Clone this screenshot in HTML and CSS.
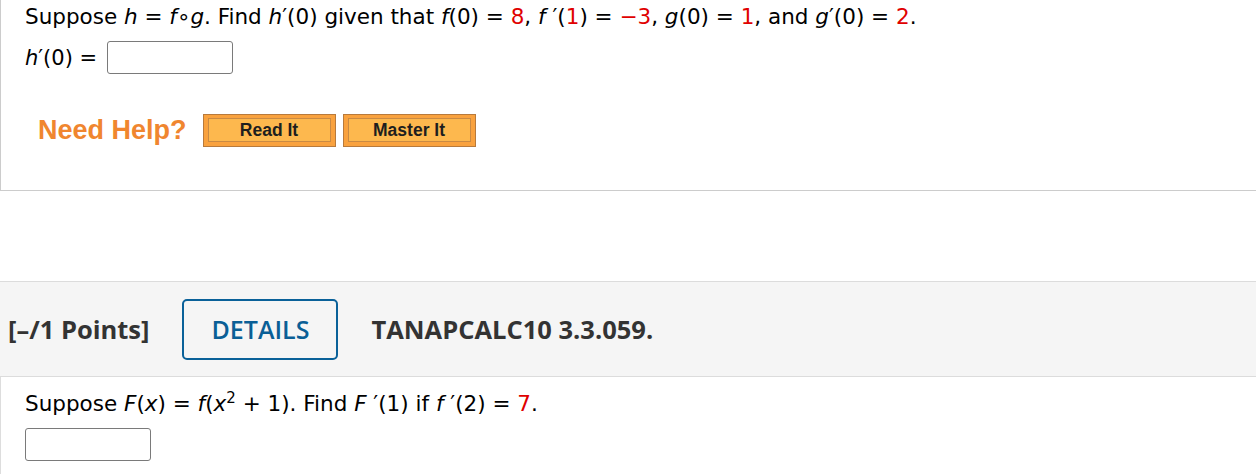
FILE: index.html
```html
<!DOCTYPE html>
<html>
<head>
<meta charset="utf-8">
<link rel="stylesheet" href="styles.css">
</head>
<body>
<div class="question q1">
  <p class="stem">Suppose <i>h</i> = <i>f</i>∘<i>g</i>. Find <i>h</i>′(0) given that <i>f</i>(0) = <span class="red">8</span>, <i>f</i> ′(<span class="red">1</span>) = <span class="red">−3</span>, <i>g</i>(0) = <span class="red">1</span>, and <i>g</i>′(0) = <span class="red">2</span>.</p>
  <div class="answer-row"><span><i>h</i>′(0) = </span><span class="input"></span></div>
  <div class="help">
    <span class="need">Need Help?</span>
    <span class="btn"><span class="btn-in">Read It</span></span>
    <span class="btn"><span class="btn-in">Master It</span></span>
  </div>
</div>
<div class="spacer"></div>
<div class="qhead">
  <span class="points">[–/1 Points]</span>
  <span class="details">DETAILS</span>
  <span class="code">TANAPCALC10 3.3.059.</span>
</div>
<div class="question q2">
  <p class="stem">Suppose <i>F</i>(<i>x</i>) = <i>f</i>(<i>x</i><sup>2</sup> + 1). Find <i>F</i> ′(1) if <i>f</i> ′(2) = <span class="red">7</span>.</p>
  <div class="answer-row"><span class="input"></span></div>
</div>
</body>
</html>
```
FILE: styles.css
```css
html, body {
  margin: 0;
  padding: 0;
  background: #fff;
}
body {
  width: 1256px;
  height: 474px;
  overflow: hidden;
  font-family: "DejaVu Sans", Verdana, sans-serif;
  color: #000;
}
.question {
  border-left: 1px solid #ccc;
  padding-left: 24px;
}
.q1 {
  border-bottom: 1px solid #ccc;
  box-sizing: border-box;
  height: 191px;
}
.stem {
  margin: 0;
  font-size: 21.5px;
  line-height: 24px;
  padding-top: 5px;
}
.red { color: #e00000; }
.stem sup {
  font-size: 15px;
  line-height: 0;
}
.answer-row {
  display: flex;
  align-items: center;
  gap: 10px;
  font-size: 21px;
  margin-top: 12px;
}
.input {
  display: inline-block;
  width: 124px;
  height: 31px;
  border: 1px solid #7a7a7a;
  border-radius: 3px;
  background: #fff;
}
.help {
  display: flex;
  align-items: center;
  margin-top: 40px;
  margin-left: 13px;
}
.need {
  font-family: "Liberation Sans", Arial, sans-serif;
  font-weight: bold;
  font-size: 27px;
  color: #f0862f;
  margin-right: 16px;
}
.btn {
  display: inline-block;
  box-sizing: border-box;
  width: 133px;
  height: 33px;
  border: 1px solid #b87a3c;
  background: #f9a23f;
  padding: 3px 4px 4px 4px;
  margin-right: 7px;
}
.btn-in {
  display: flex;
  align-items: center;
  justify-content: center;
  height: 100%;
  box-sizing: border-box;
  border: 1px solid #c98a44;
  background: #fdb84e;
  font-family: "Liberation Sans", Arial, sans-serif;
  font-weight: bold;
  font-size: 17.5px;
  color: #1e1e1e;
}
.spacer {
  height: 90px;
}
.qhead {
  height: 96px;
  box-sizing: border-box;
  border-top: 1px solid #dcdcdc;
  border-bottom: 1px solid #dcdcdc;
  background: #f5f5f5;
  display: flex;
  align-items: center;
  padding-left: 8px;
  font-family: "Open Sans", sans-serif;
  color: #333;
}
.points {
  font-weight: bold;
  font-size: 25.5px;
}
.details {
  margin-left: 33px;
  width: 156px;
  height: 61px;
  box-sizing: border-box;
  border: 2px solid #0a6199;
  border-radius: 5px;
  display: flex;
  align-items: center;
  justify-content: center;
  color: #0a5f96;
  font-size: 25px;
  font-weight: 600;
}
.code {
  margin-left: 33px;
  font-weight: bold;
  font-size: 25.5px;
}
.q2 {
  border-left-color: #ddd;
  height: 98px;
}
.q2 .stem {
  padding-top: 15px;
}
.q2 .answer-row {
  margin-top: 12px;
}
```
